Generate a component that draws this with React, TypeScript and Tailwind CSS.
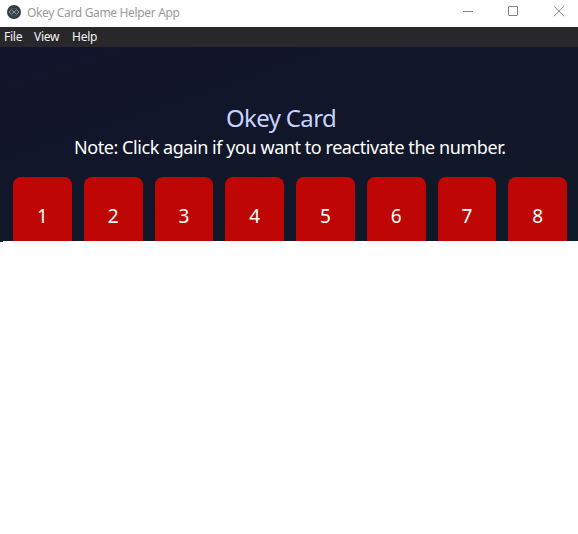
const cards = [1, 2, 3, 4, 5, 6, 7, 8];

function AppIcon() {
  return (
    <svg className="ml-[7px] h-[14px] w-[14px] shrink-0" viewBox="0 0 14 14" fill="none">
      <circle cx="7" cy="7" r="7" fill="#333c43" />
      <path d="M2 7l2.5-2.2L7 7l2.5-2.2L12 7 9.500 9.200 7 7 4.500 9.200z" stroke="#a5b0b6" strokeWidth=".8" />
      <path d="M4.500 3.500h5M4.500 10.700h5" stroke="#68757d" strokeWidth=".8" strokeDasharray="1 1" />
    </svg>
  );
}

function TitleBar() {
  return (
    <header className="flex h-[27px] items-start bg-[#fefefe]">
      <div className="flex h-[23px] flex-1 items-center">
        <AppIcon />
        <h1 className="ml-[6px] whitespace-nowrap pt-px text-[12px] leading-[23px] tracking-[-0.34px] text-[#999a9b]">Okey Card Game Helper App</h1>
      </div>
      <svg className="h-[23px] w-[116px]" viewBox="0 0 116 23" fill="none" stroke="#858585">
        <path d="M1 11.5h10" />
        <rect x="46.5" y="6.5" width="9" height="9" rx=".5" />
        <path d="M92 6.2l10 10M102 6.2l-10 10" />
      </svg>
    </header>
  );
}

export default function App() {
  return (
    <div className="h-[534px] w-[578px] overflow-hidden bg-white font-['Noto_Sans',sans-serif]">
      <TitleBar />
      <nav className="flex h-5 items-center bg-[#28282c] pl-1 text-[12px] text-[#f3f3f3]">
        <span className="w-[30px] tracking-[-0.25px]">File</span>
        <span className="w-[38px] tracking-[-0.25px]">View</span>
        <span className="tracking-[-0.25px]">Help</span>
      </nav>
      <main className="h-[194px] overflow-hidden bg-linear-to-br from-[#12142b] to-[#101927] pt-[53px]">
        <h2 className="ml-[226px] whitespace-nowrap text-[24px] leading-9 tracking-[-0.65px] text-[#c7d2fe]">Okey Card</h2>
        <p className="ml-[74px] whitespace-nowrap text-[18px] leading-[22px] tracking-[-0.44px] text-white">Note: Click again if you want to reactivate the number.</p>
        <div className="ml-[13px] mt-[19px] grid w-[554px] grid-cols-8 gap-3">
          {cards.map((n) => (
            <div key={n} className="flex h-[78px] items-center justify-center rounded-lg bg-[#be0704] text-[19px] text-white">{n}</div>
          ))}
        </div>
      </main>
      <div className="h-px w-[3px] bg-[#101725]" />
    </div>
  );
}
